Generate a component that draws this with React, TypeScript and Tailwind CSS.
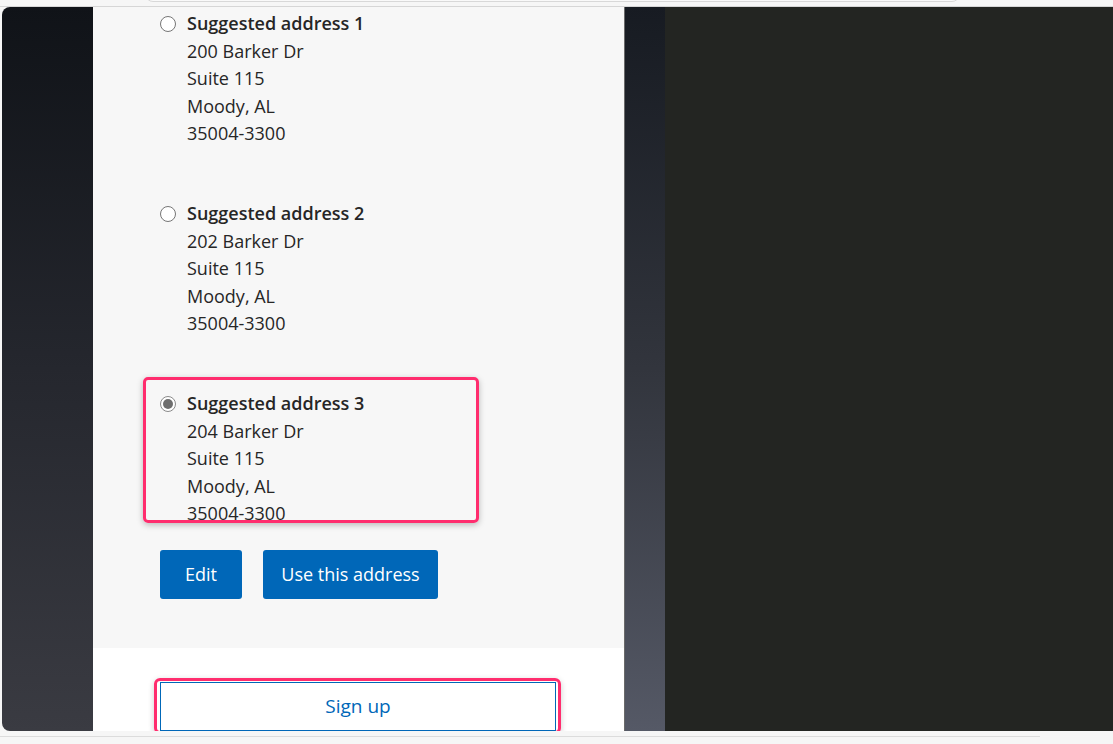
import React from "react";

const font = { fontFamily: '"Open Sans", "Noto Sans", sans-serif' };

function Radio({ checked }: { checked?: boolean }) {
  return checked ? (
    <div className="w-[16px] h-[16px] rounded-full border border-[#8a8a8a] bg-white flex items-center justify-center shrink-0">
      <div className="w-[10px] h-[10px] rounded-full bg-[#6e6e6e]" />
    </div>
  ) : (
    <div className="w-[16px] h-[16px] rounded-full border border-[#767676] bg-white shrink-0" />
  );
}

function Address({ n, street, checked }: { n: number; street: string; checked?: boolean }) {
  return (
    <div className="flex items-start">
      <div className="w-[27px] h-[27.5px] flex items-center">
        <Radio checked={checked} />
      </div>
      <div className="text-[18px] leading-[27.5px] text-[#262626]">
        <div className="font-semibold">Suggested address {n}</div>
        <div>{street}</div>
        <div>Suite 115</div>
        <div>Moody, AL</div>
        <div>35004-3300</div>
      </div>
    </div>
  );
}

export default function App() {
  return (
    <div className="w-[1113px] h-[744px] bg-[#f6f6f6] relative overflow-hidden flex flex-col" style={font}>
      {/* top strip with address bar edge */}
      <div className="h-[7px] relative shrink-0 border-b border-[#d6d6d6]">
        <div className="absolute left-[145px] w-[815px] -top-[10px] h-[12px] rounded-b-[8px] border border-[#d8d8d8] bg-[#f9f9f9]" />
      </div>
      <div className="flex h-[724px] ml-[2px] rounded-l-[8px] overflow-hidden shrink-0">
        {/* left background */}
        <div className="w-[91px] bg-gradient-to-b from-[#101318] via-[#25272e] to-[#3a3b42]" />
        {/* panel */}
        <div className="w-[531px] flex flex-col">
          <div className="flex-1 bg-[#f7f7f7] pl-[67px] pt-[3px] overflow-hidden">
            <div className="flex flex-col gap-[52.5px]">
              <Address n={1} street="200 Barker Dr" />
              <Address n={2} street="202 Barker Dr" />
              <div className="relative">
                <Address n={3} street="204 Barker Dr" checked />
                <div className="absolute -left-[17px] -top-[13px] w-[336px] h-[146px] rounded-[5px] border-[3px] border-[#ff2d6e] shadow-[0_2px_6px_rgba(0,0,0,0.25)]" />
              </div>
            </div>
            <div className="flex gap-[21px] mt-[22px]">
              <button className="h-[49px] w-[82px] bg-[#0067b8] text-white text-[18px] rounded-[3px]">Edit</button>
              <button className="h-[49px] w-[175px] bg-[#0067b8] text-white text-[18px] rounded-[3px]">Use this address</button>
            </div>
          </div>
          <div className="h-[83px] bg-white pl-[67px] pt-[34px] shrink-0">
            <div className="relative w-[396px]">
              <button className="w-[396px] h-[49px] border border-[#0067b8] bg-white text-[#0067b8] text-[19px]">Sign up</button>
              <div className="absolute -left-[6px] -top-[4px] w-[407px] h-[56px] rounded-[6px] border-[3px] border-[#ff2d6e] shadow-[0_2px_6px_rgba(0,0,0,0.2)]" />
            </div>
          </div>
        </div>
        {/* strip */}
        <div className="w-[41px] bg-gradient-to-b from-[#171b22] via-[#32353d] to-[#555966] border-l border-[#6a6a6a]" />
        {/* right */}
        <div className="flex-1 bg-[#232522]" />
      </div>
      <div className="flex-1 relative">
        <div className="absolute left-0 w-[1040px] top-[5px] h-[1px] bg-[#dcdcdc]" />
      </div>
    </div>
  );
}
